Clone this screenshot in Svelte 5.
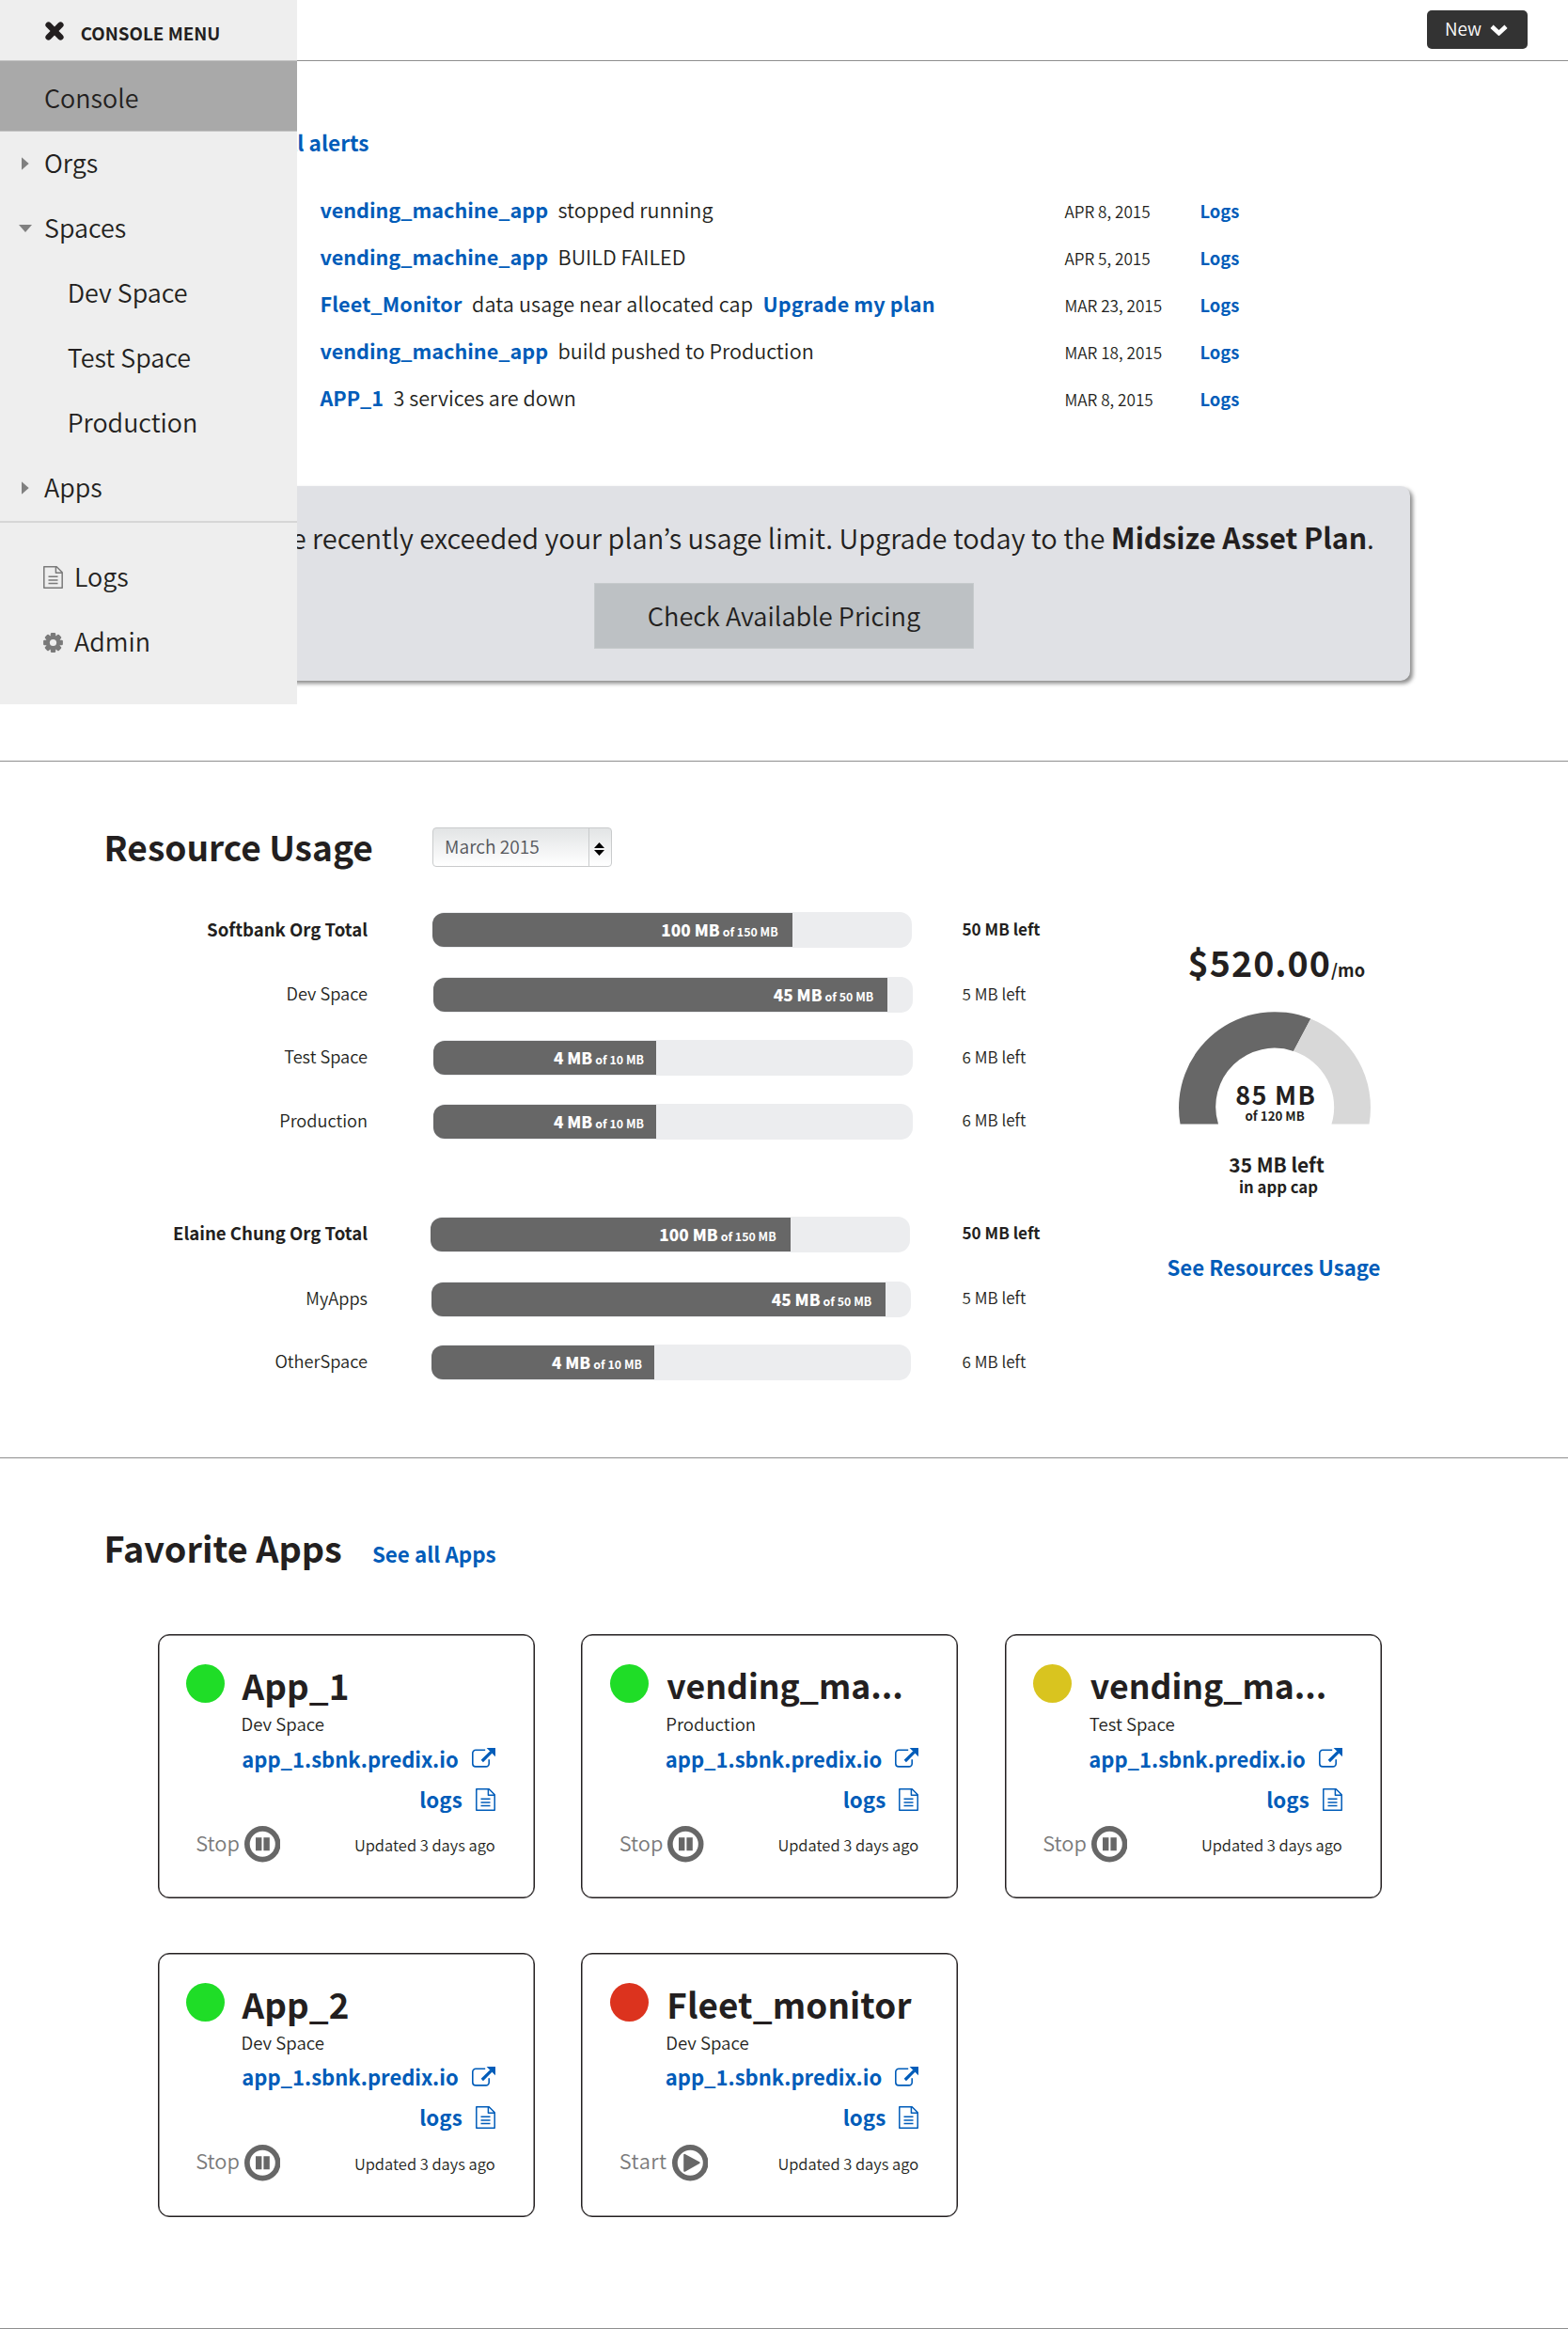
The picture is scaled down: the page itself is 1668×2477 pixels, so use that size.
<script>
  const alerts = [
    { app: 'vending_machine_app', text: 'stopped running', date: 'APR 8, 2015' },
    { app: 'vending_machine_app', text: 'BUILD FAILED', date: 'APR 5, 2015' },
    { app: 'Fleet_Monitor', text: 'data usage near allocated cap', action: 'Upgrade my plan', date: 'MAR 23, 2015' },
    { app: 'vending_machine_app', text: 'build pushed to Production', date: 'MAR 18, 2015' },
    { app: 'APP_1', text: '3 services are down', date: 'MAR 8, 2015' }
  ];

  const orgs = [
    [
      { name: 'Softbank Org Total', used: '100 MB', cap: '150 MB', left: '50 MB left', fill: 75.1, total: true },
      { name: 'Dev Space', used: '45 MB', cap: '50 MB', left: '5 MB left', fill: 94.8 },
      { name: 'Test Space', used: '4 MB', cap: '10 MB', left: '6 MB left', fill: 46.6, short: true },
      { name: 'Production', used: '4 MB', cap: '10 MB', left: '6 MB left', fill: 46.6, short: true }
    ],
    [
      { name: 'Elaine Chung Org Total', used: '100 MB', cap: '150 MB', left: '50 MB left', fill: 75.1, total: true },
      { name: 'MyApps', used: '45 MB', cap: '50 MB', left: '5 MB left', fill: 94.8 },
      { name: 'OtherSpace', used: '4 MB', cap: '10 MB', left: '6 MB left', fill: 46.6, short: true }
    ]
  ];

  const apps = [
    { name: 'App_1', space: 'Dev Space', status: 'ok' },
    { name: 'vending_ma...', space: 'Production', status: 'ok', inset: true, long: true },
    { name: 'vending_ma...', space: 'Test Space', status: 'warn', inset: true, long: true },
    { name: 'App_2', space: 'Dev Space', status: 'ok' },
    { name: 'Fleet_monitor', space: 'Dev Space', status: 'stopped', inset: true }
  ];

  const menu = [
    { label: 'Orgs', arrow: 'closed' },
    { label: 'Spaces', arrow: 'open' },
    { label: 'Dev Space', child: true },
    { label: 'Test Space', child: true },
    { label: 'Production', child: true },
    { label: 'Apps', arrow: 'closed' }
  ];
</script>

{#snippet docIcon()}
  <svg class="doc" viewBox="0 0 21 24" width="21" height="24">
    <path d="M.8.8h13.4l6 6v16.4H.8zM13.4.8v6.4h6.8M5.5 11.2h10M5.5 15h10M5.5 18.6h10" fill="none" stroke="currentColor" stroke-width="1.5" stroke-linejoin="round" />
  </svg>
{/snippet}

<div class="page">
  <header class="topbar">
    <button class="new">
      New
      <svg viewBox="0 0 19 13" width="19" height="13">
        <path d="M2 3.2l7.5 7 7.5-7" fill="none" stroke="#fff" stroke-width="4.6" />
      </svg>
    </button>
  </header>

  <nav class="sidebar">
    <div class="menu-head">
      <svg viewBox="0 0 20 20" width="20" height="20">
        <path d="M3.6 3.6l12.8 12.8M16.4 3.6L3.6 16.4" stroke="#231f20" stroke-width="6.4" stroke-linecap="round" />
      </svg>
      <span>CONSOLE MENU</span>
    </div>
    <div class="current">Console</div>
    <div class="tree">
      {#each menu as item}
        <div class="item" class:child={item.child}>
          <span class="arrow {item.arrow ?? ''}"></span>{item.label}
        </div>
      {/each}
    </div>
    <div class="tools">
      <div class="item tool">{@render docIcon()}Logs</div>
      <div class="item tool">
        <svg viewBox="-10.5 -10.5 21 21" width="21" height="21">
          {#each [0, 45, 90, 135] as turn}
            <rect x="-2.7" y="-10.4" width="5.4" height="20.8" rx="1.2" fill="#7a7a7a" transform="rotate({turn})" />
          {/each}
          <circle r="7.8" fill="#7a7a7a" />
          <circle r="3.6" fill="#eee" />
        </svg>Admin
      </div>
    </div>
  </nav>

  <section class="overview">
    <div class="see-alerts"><a class="link">See all alerts</a></div>
    <div class="alerts">
      {#each alerts as a}
        <div class="alert">
          <div class="what" class:wide={a.action}>
            <a class="link">{a.app}</a><span>{a.text}</span>{#if a.action}<a class="link">{a.action}</a>{/if}
          </div>
          <span class="date">{a.date}</span>
          <a class="link log">Logs</a>
        </div>
      {/each}
    </div>
    <div class="promo">
      <p>You have recently exceeded your plan’s usage limit. Upgrade today to the <b>Midsize Asset Plan</b>.</p>
      <button class="pricing">Check Available Pricing</button>
    </div>
  </section>

  <section class="usage">
    <div class="usage-head">
      <h2>Resource Usage</h2>
      <div class="select">
        <span>March 2015</span>
        <div class="stepper">
          <svg viewBox="0 0 11 14" width="11" height="14">
            <path d="M5.5 0L11 6H0zM5.5 14L0 8h11z" fill="#000" />
          </svg>
        </div>
      </div>
    </div>
    <div class="usage-body">
      <div class="orgs">
        {#each orgs as org, i}
          <div class="org" class:shifted={i === 1}>
            {#each org as row}
              <div class="row" class:total={row.total}>
                <span class="name">{row.name}</span>
                <div class="track">
                  <div class="fill" class:short={row.short} style="width:{row.fill}%">
                    <b>{row.used}</b><small>of {row.cap}</small>
                  </div>
                </div>
                <span class="left">{row.left}</span>
              </div>
            {/each}
          </div>
        {/each}
      </div>
      <div class="cost">
        <div class="price">$520.00<small>/mo</small></div>
        <svg class="gauge" viewBox="0 0 204 120" width="204" height="120">
          <path d="M1.5 119.5A102 102 0 0 1 140.3 7.6L122 42A62.5 62.5 0 0 0 42 119.5z" fill="#676767" />
          <path d="M140.3 7.6A102 102 0 0 1 202.5 119.5H162.5A62.5 62.5 0 0 0 122 42z" fill="#d8d8d8" />
          <text class="g-big" x="103.2" y="99">85 MB</text>
          <text class="g-small" x="102.2" y="116.4">of 120 MB</text>
        </svg>
        <div class="remain">35 MB left</div>
        <div class="in-cap">in app cap</div>
        <a class="link see-usage">See Resources Usage</a>
      </div>
    </div>
  </section>

  <section class="favorites">
    <div class="fav-head">
      <h2>Favorite Apps</h2>
      <a class="link">See all Apps</a>
    </div>
    <div class="cards">
      {#each apps as app}
        <article class="card">
          <div class="card-head" class:inset={app.inset}>
            <span class="dot {app.status}"></span>
            <div>
              <h3 class:long={app.long}>{app.name}</h3>
              <p>{app.space}</p>
            </div>
          </div>
          <div class="card-link">
            <a class="link">app_1.sbnk.predix.io</a>
            <svg viewBox="0 0 25 21" width="25" height="21">
              <path d="M14.2 2.3H4A3.2 3.2 0 0 0 .8 5.5v11.2A3.2 3.2 0 0 0 4 19.9h11a3.2 3.2 0 0 0 3.2-3.2v-4.5" fill="none" stroke="#005cb9" stroke-width="1.6" />
              <path d="M10.8 14L20.5 4.3" stroke="#005cb9" stroke-width="3.2" />
              <path d="M15.6 0H25v9.2z" fill="#005cb9" />
            </svg>
          </div>
          <div class="card-link logs">
            <a class="link">logs</a>
            {@render docIcon()}
          </div>
          <div class="card-foot">
            <span class="toggle" class:start={app.status === 'stopped'}>{app.status === 'stopped' ? 'Start' : 'Stop'}</span>
            <svg viewBox="0 0 38.5 38.5" width="38.5" height="38.5">
              <circle cx="19.25" cy="19.25" r="16.4" fill="none" stroke="#676767" stroke-width="5.7" />
              {#if app.status === 'stopped'}
                <path d="M13.2 10.8l15.4 8.4-15.4 8.6z" fill="#676767" stroke="#676767" stroke-width="2" stroke-linejoin="round" />
              {:else}
                <path d="M12 12.2h6.4v14H12zM20.4 12.2h6.4v14h-6.4z" fill="#676767" />
              {/if}
            </svg>
            <span class="updated">Updated 3 days ago</span>
          </div>
        </article>
      {/each}
    </div>
  </section>
</div>

<style>
  :global(body) { background: #fff; }
  .page {
    position: relative;
    width: 1668px;
    height: 2477px;
    overflow: hidden;
    color: #231f20;
    font-family: 'Noto Sans CJK JP', 'Open Sans', sans-serif;
    font-weight: 350;
    white-space: nowrap;
  }
  .page *, .page { box-sizing: border-box; }
  svg { display: block; flex: none; }
  h2, h3, p { margin: 0; }
  button { font: inherit; color: inherit; border: 0; padding: 0; }
  .link { color: #005cb9; font-weight: 700; }
  h2 { font-size: 37.1px; line-height: 50px; font-weight: 700; }

  .topbar {
    display: flex;
    justify-content: flex-end;
    height: 65px;
    padding: 11px 43px 0 0;
    border-bottom: 1px solid #8f8f8f;
  }
  .new {
    display: flex;
    align-items: center;
    gap: 9px;
    width: 107.5px;
    height: 40.5px;
    padding: 0 0 3px 19.5px;
    border-radius: 5px;
    background: #333;
    color: #fff;
    font-size: 18.9px;
  }
  .new svg { margin-top: 4px; }

  .sidebar {
    position: absolute;
    z-index: 2;
    left: 0;
    top: 0;
    width: 316px;
    height: 749px;
    background: #eee;
    font-size: 26.9px;
  }
  .menu-head {
    display: flex;
    align-items: center;
    gap: 17.7px;
    height: 65px;
    padding: 5px 0 0 48px;
    border-bottom: 1px solid #c4c4c4;
    font-size: 18.8px;
    font-weight: 700;
  }
  .menu-head svg { margin-top: -3px; }
  .current {
    height: 75px;
    padding: 2px 0 0 47px;
    line-height: 74px;
    background: #a9a9a9;
    border-bottom: 1px solid #c4c4c4;
  }
  .item {
    display: flex;
    align-items: center;
    height: 69px;
    padding-bottom: 5px;
  }
  .arrow { width: 47px; padding-left: 20px; }
  .child .arrow { width: 71.7px; }
  .arrow::before { content: ''; display: block; margin-top: 4px; }
  .arrow.closed::before {
    width: 8px;
    height: 14px;
    margin-left: 2.7px;
    background: #808080;
    clip-path: polygon(0 0, 100% 50%, 0 100%);
  }
  .arrow.open::before {
    width: 14px;
    height: 8px;
    background: #808080;
    clip-path: polygon(0 0, 100% 0, 50% 100%);
  }
  .tools { padding-top: 24px; border-top: 2px solid #d6d6d6; }
  .tool { gap: 12px; padding-left: 46px; }
  .tool svg { margin-top: 4px; color: #7a7a7a; }

  .overview { height: 745px; padding-top: 73px; border-bottom: 1px solid #8f8f8f; }
  .see-alerts { width: 392.5px; text-align: right; font-size: 22.6px; line-height: 28px; }
  .alerts { margin: 32.4px 0 0 340.4px; }
  .alert {
    display: grid;
    grid-template-columns: 792px 144px auto;
    align-items: baseline;
    line-height: 50px;
    height: 50px;
    font-size: 21.6px;
  }
  .what { display: flex; gap: 10.5px; }
  .wide { letter-spacing: 0.12px; }
  .date { font-size: 17.2px; }
  .log { font-size: 18.4px; }
  .promo {
    display: flex;
    flex-direction: column;
    align-items: center;
    width: 1332px;
    height: 207px;
    margin: 68.8px 0 0 168px;
    padding-top: 33.8px;
    border-radius: 10px;
    background: #e0e1e5;
    box-shadow: 3px 3px 4px rgba(0, 0, 0, 0.45);
  }
  .promo p { font-size: 29px; line-height: 40px; }
  .promo b { font-size: 30.3px; font-weight: 700; line-height: 0; }
  .pricing {
    width: 404px;
    height: 70px;
    margin-top: 29px;
    padding-bottom: 2px;
    border: 1px solid #c6cacc;
    background: #bdc1c4;
    font-size: 27.2px;
  }

  .usage { height: 741px; padding-top: 64.5px; border-bottom: 1px solid #8f8f8f; }
  .usage-head { display: flex; align-items: center; padding-left: 110.5px; }
  .usage-head h2 { width: 349.5px; }
  .select {
    display: flex;
    width: 191px;
    height: 41.5px;
    margin-top: 3px;
    padding-left: 12px;
    border: 1.4px solid #c9cbcc;
    border-radius: 4px;
    background: linear-gradient(#e2e4e5, #fff);
    color: #54565b;
    font-size: 19.2px;
    line-height: 38px;
  }
  .select span { width: 153px; }
  .stepper { display: flex; align-items: center; padding: 3px 0 0 5px; border-left: 1px solid #c9cbcc; }
  .usage-body { display: flex; margin-top: 45.5px; }
  .orgs { width: 1206px; }
  .org { display: flex; flex-direction: column; gap: 29.4px; }
  .shifted { margin-top: 82px; }
  .row { display: flex; align-items: center; height: 38px; font-size: 18.2px; }
  .row.total { margin-bottom: 1.7px; font-weight: 700; }
  .name { width: 391px; padding-bottom: 4px; text-align: right; }
  .total .name { font-size: 18.6px; }
  .left { width: 120px; padding-bottom: 4px; font-size: 17.1px; }
  .track {
    width: 510.5px;
    height: 38px;
    margin: 0 52.5px 0 69.5px;
    padding: 1px 0;
    border-radius: 13px;
    background: #ecedef;
  }
  .total .track { margin: 0 53.5px 0 68.5px; }
  .shifted .track { margin: 0 54.5px 0 67.5px; }
  .shifted .total .track { margin: 0 55.5px 0 66.5px; }
  .fill {
    display: flex;
    align-items: baseline;
    justify-content: flex-end;
    gap: 3px;
    height: 36px;
    padding-right: 15.3px;
    border-radius: 12px 0 0 12px;
    background: #676767;
    color: #fff;
    font-size: 17.2px;
    font-weight: 700;
    line-height: 36px;
  }
  .fill.short { padding-right: 13.5px; }
  .fill small { font-size: 12.4px; }

  .cost { display: flex; flex-direction: column; align-items: center; width: 300px; padding-top: 30.6px; font-weight: 700; }
  .price { padding-left: 3.5px; font-size: 37.6px; letter-spacing: 1.05px; line-height: 44px; }
  .price small { font-size: 18.2px; letter-spacing: 0; line-height: 0; }
  .gauge { margin-top: 31.9px; overflow: visible; }
  .gauge text { fill: #231f20; text-anchor: middle; }
  .g-big { font-size: 27px; letter-spacing: 1.3px; }
  .g-small { font-size: 13.3px; }
  .remain { margin-top: 28.3px; padding-left: 4px; font-size: 20.9px; line-height: 26px; }
  .in-cap { padding-left: 8px; font-size: 16.7px; line-height: 22px; }
  .see-usage { margin-top: 60.2px; margin-left: -2px; font-size: 22.2px; line-height: 28px; }

  .favorites { height: 926px; padding-top: 70.3px; border-bottom: 1px solid #8f8f8f; }
  .fav-head { display: flex; align-items: baseline; padding-left: 110.5px; }
  .fav-head h2 { width: 285.4px; font-size: 37.8px; }
  .fav-head .link { font-size: 22.4px; }
  .cards {
    display: grid;
    grid-template-columns: repeat(3, 401px);
    gap: 57.7px 49.5px;
    margin: 67px 0 0 167.7px;
  }
  .card {
    height: 281px;
    padding: 31px 41px 0 29.6px;
    border: 1px solid #231f20;
    border-radius: 12px;
    box-shadow: inset 0 0 0 0.5px #231f20;
  }
  .card-head { display: flex; gap: 18.3px; }
  .inset { gap: 19.5px; }
  .dot { width: 41px; height: 41px; border-radius: 50%; }
  .ok { background: #1fdd27; }
  .warn { background: #d9c41f; }
  .stopped { background: #dc331e; }
  h3 { margin-top: 1.8px; font-size: 36.8px; line-height: 40px; font-weight: 700; letter-spacing: 0.1px; }
  h3.long { font-size: 35.6px; letter-spacing: 0; }
  .card-head p { margin-top: 9.3px; margin-left: -1px; font-size: 18.6px; line-height: 24px; }
  .card-link { display: flex; align-items: center; justify-content: flex-end; gap: 14px; margin-top: 10.2px; font-size: 22px; line-height: 28px; }
  .card-link.logs { margin-top: 15px; font-size: 22.3px; }
  .logs svg { margin-top: 2px; }
  .doc { color: #7a7a7a; }
  .logs :global(.doc) { color: #005cb9; }
  .card-foot { display: flex; align-items: center; margin-top: 15.8px; padding-left: 10px; }
  .toggle { padding-bottom: 4px; margin-right: 5px; color: #7a7a7a; font-size: 21.8px; line-height: 28px; }
  .toggle.start { letter-spacing: 0.5px; }
  .updated { margin-left: auto; padding-top: 1px; font-size: 16.5px; }
</style>
